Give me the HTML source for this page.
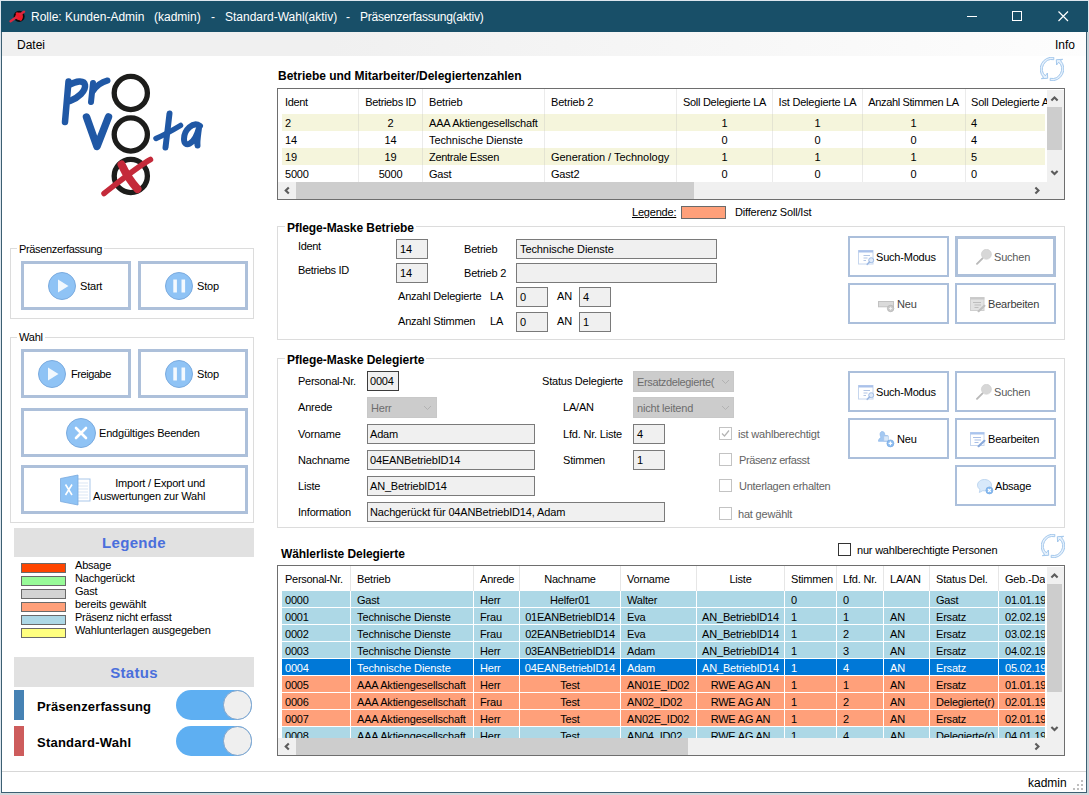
<!DOCTYPE html>
<html><head><meta charset="utf-8">
<style>
html,body{margin:0;padding:0;overflow:hidden;font-family:"Liberation Sans",sans-serif;}
body{width:1089px;height:795px;overflow:hidden;background:#fff;position:relative;font-family:"Liberation Sans",sans-serif;font-size:11px;color:#000;}
.a{position:absolute;}
.t{position:absolute;white-space:nowrap;}
.g{color:#6d6d6d;}
.tb{position:absolute;box-sizing:border-box;border:1px solid #7a7a7a;background:#f0f0f0;height:20px;}
.cb{position:absolute;box-sizing:border-box;background:#cccccc;border:1px solid #c8c8c8;height:21px;}
.gb{position:absolute;box-sizing:border-box;border:1px solid #dcdcdc;}
.btn{position:absolute;box-sizing:border-box;border:3px solid #adc0da;background:#fff;}
.btn2{position:absolute;box-sizing:border-box;border:2px solid #abbfdb;background:#fff;}
.chk{position:absolute;box-sizing:border-box;width:13px;height:13px;border:1px solid #c3c3c3;background:#fff;}
.grid{position:absolute;box-sizing:border-box;border:1px solid #6e6e6e;background:#fff;}
</style></head><body>
<div class="a" style="left:0px;top:0px;width:1089px;height:795px;background:#dde6ee;"></div>
<div class="a" style="left:1px;top:1px;width:1086px;height:792px;background:#3c5f72;"></div>
<div class="a" style="left:2px;top:32px;width:1084px;height:760px;background:#fff;"></div>
<div class="a" style="left:1px;top:1px;width:1087px;height:31px;background:#184f68;"></div>
<div class="a" style="left:1087px;top:32px;width:2px;height:763px;background:#c9d3d9;"></div>
<div class="a" style="left:0px;top:793px;width:1089px;height:2px;background:#d4d9dc;"></div>
<svg class="a" style="left:9px;top:8px;" width="18" height="16" viewBox="0 0 18 16"><circle cx="10.100" cy="8.400" r="4.700" fill="#e8202c" stroke="#0c0c0c" stroke-width="1.700"/><path d="M1.600 13.200 L15 3.700" stroke="#dc2840" stroke-width="2.400" stroke-linecap="round"/><path d="M8 5.500 L11.800 11.500" stroke="#f01828" stroke-width="2.600" stroke-linecap="round"/></svg>
<div class="t" style="left:31px;top:10px;font-size:12px;line-height:14px;letter-spacing:0.000px;color:#fff;">Rolle: Kunden-Admin</div>
<div class="t" style="left:154px;top:10px;font-size:12px;line-height:14px;letter-spacing:0.000px;color:#fff;">(kadmin)</div>
<div class="t" style="left:211px;top:10px;font-size:12px;line-height:14px;letter-spacing:0.000px;color:#fff;">-</div>
<div class="t" style="left:225px;top:10px;font-size:12px;line-height:14px;letter-spacing:0.000px;color:#fff;">Standard-Wahl(aktiv)</div>
<div class="t" style="left:346px;top:10px;font-size:12px;line-height:14px;letter-spacing:0.000px;color:#fff;">-</div>
<div class="t" style="left:360px;top:10px;font-size:12px;line-height:14px;letter-spacing:-0.256px;color:#fff;">Präsenzerfassung(aktiv)</div>
<svg class="a" style="left:960px;top:9px;" width="126" height="16" viewBox="0 0 126 16"><g fill="none" stroke="#fff" stroke-width="1"><path d="M7 7.500 H17"/><rect x="52.500" y="2.500" width="9" height="9"/><path d="M98.500 2.500 L108 12 M108 2.500 L98.500 12" stroke-width="1.200"/></g></svg>
<div class="a" style="left:2px;top:32px;width:1084px;height:24px;background:linear-gradient(90deg,#f0f0f0 0%,#f0f0f0 30%,#fdfdfd 100%);"></div>
<div class="t" style="left:17px;top:38px;font-size:12px;line-height:14px;letter-spacing:0.000px;">Datei</div>
<div class="t" style="left:1055px;top:38px;font-size:12px;line-height:14px;letter-spacing:0.000px;">Info</div>
<div class="a" style="left:2px;top:771px;width:1084px;height:1px;background:#d7d7d7;"></div>
<div class="t" style="left:1028px;top:776px;font-size:12px;line-height:14px;letter-spacing:0.000px;">kadmin</div>
<svg class="a" style="left:1073px;top:780px;" width="11" height="11"><g fill="#bfbfbf"><rect x="8" y="0" width="2" height="2"/><rect x="4" y="4" width="2" height="2"/><rect x="8" y="4" width="2" height="2"/><rect x="0" y="8" width="2" height="2"/><rect x="4" y="8" width="2" height="2"/><rect x="8" y="8" width="2" height="2"/></g></svg>
<svg class="a" style="left:50px;top:65px;" width="170" height="140" viewBox="50 65 170 140">
<g fill="none" stroke-linecap="round" stroke-linejoin="round">
<circle cx="130.800" cy="93" r="16.600" stroke="#1d1d1b" stroke-width="5.300"/>
<circle cx="130.800" cy="134.500" r="16.600" stroke="#1d1d1b" stroke-width="5.300"/>
<circle cx="130.800" cy="176" r="16.600" stroke="#1d1d1b" stroke-width="5.300"/>
<g stroke="#2058a5">
<path d="M68.500 81.500 L65 122" stroke-width="6.500"/>
<path d="M69 85 C76 81 84 79.500 85 85 C86 91 78 98 70 101" stroke-width="6.500"/>
<path d="M93 83 L91 102" stroke-width="6"/>
<path d="M93 91 C97 85 102 82 107.500 80.500" stroke-width="6"/>
<path d="M86.500 117 L97 146.500 L108.500 117" stroke-width="7.500"/>
<path d="M169.500 113.500 L165.500 147.500" stroke-width="6"/>
<path d="M156 138.500 C164 135 173 130 180.500 125.500" stroke-width="5.500"/>
<path d="M200 126 C193 121 184 130 184 139 C184 148 194 146 199 128 C198 136 197 141 197.500 145.500" stroke-width="6"/>
</g>
<g stroke="#c42a3a">
<path d="M104 193.500 C120 181 137 167 150.500 159.500" stroke-width="5.500"/>
<path d="M121.500 164.500 C126 174 132 183 137.500 189" stroke-width="8"/>
</g>
</g>
</svg>
<div class="gb" style="left:10px;top:248px;width:244px;height:71px;"></div>
<div class="t" style="left:17px;top:243px;font-size:11px;line-height:13px;letter-spacing:-0.354px;background:#fff;padding:0 2px;">Präsenzerfassung</div>
<div class="btn" style="left:21px;top:261px;width:110px;height:49px;"></div>
<div class="btn" style="left:138px;top:261px;width:110px;height:49px;"></div>
<svg class="a" style="left:48px;top:272px;" width="28" height="28" viewBox="0 0 28 28"><circle cx="14" cy="14" r="13.500" fill="#8fc3f5" stroke="#7aaade" stroke-width="1"/><path d="M10 7.500 L20.500 14 L10 20.500 Z" fill="#fff" fill-opacity="0.88"/></svg>
<div class="t" style="left:80px;top:280px;font-size:11px;line-height:13px;letter-spacing:-0.200px;">Start</div>
<svg class="a" style="left:165px;top:272px;" width="28" height="28" viewBox="0 0 28 28"><circle cx="14" cy="14" r="13.500" fill="#8fc3f5" stroke="#7aaade" stroke-width="1"/><rect x="8.300" y="7.500" width="3.600" height="13" fill="#fff" fill-opacity="0.9"/><rect x="16.500" y="7.500" width="3.600" height="13" fill="#fff" fill-opacity="0.9"/></svg>
<div class="t" style="left:197px;top:280px;font-size:11px;line-height:13px;letter-spacing:-0.200px;">Stop</div>
<div class="gb" style="left:10px;top:337px;width:244px;height:186px;"></div>
<div class="t" style="left:17px;top:331px;font-size:11px;line-height:13px;letter-spacing:-0.200px;background:#fff;padding:0 2px;">Wahl</div>
<div class="btn" style="left:21px;top:349px;width:110px;height:49px;"></div>
<div class="btn" style="left:138px;top:349px;width:110px;height:49px;"></div>
<div class="btn" style="left:21px;top:408px;width:227px;height:49px;"></div>
<div class="btn" style="left:21px;top:465px;width:227px;height:49px;"></div>
<svg class="a" style="left:38px;top:360px;" width="28" height="28" viewBox="0 0 28 28"><circle cx="14" cy="14" r="13.500" fill="#8fc3f5" stroke="#7aaade" stroke-width="1"/><path d="M10 7.500 L20.500 14 L10 20.500 Z" fill="#fff" fill-opacity="0.88"/></svg>
<div class="t" style="left:71px;top:368px;font-size:11px;line-height:13px;letter-spacing:-0.428px;">Freigabe</div>
<svg class="a" style="left:165px;top:360px;" width="28" height="28" viewBox="0 0 28 28"><circle cx="14" cy="14" r="13.500" fill="#8fc3f5" stroke="#7aaade" stroke-width="1"/><rect x="8.300" y="7.500" width="3.600" height="13" fill="#fff" fill-opacity="0.9"/><rect x="16.500" y="7.500" width="3.600" height="13" fill="#fff" fill-opacity="0.9"/></svg>
<div class="t" style="left:197px;top:368px;font-size:11px;line-height:13px;letter-spacing:-0.200px;">Stop</div>
<svg class="a" style="left:66px;top:418px;" width="30" height="30" viewBox="0 0 30 30"><circle cx="15" cy="15" r="14.500" fill="#8fc3f5" stroke="#7aaade" stroke-width="1"/><path d="M10 10 L20 20 M20 10 L10 20" stroke="#fff" stroke-width="2.600" stroke-linecap="round"/></svg>
<div class="t" style="left:99px;top:427px;font-size:11px;line-height:13px;letter-spacing:-0.200px;">Endgültiges Beenden</div>
<svg class="a" style="left:59px;top:473px;" width="34" height="34" viewBox="0 0 34 34"><rect x="17" y="6" width="14" height="22" fill="#fff" stroke="#a9c7ea" stroke-width="1"/><path d="M19 10h10M19 13h10M19 16h10M19 19h10M19 22h10M19 25h10" stroke="#dbe7f5" stroke-width="1"/><path d="M1.500 5.500 L19 2 L19 32 L1.500 28.500 Z" fill="#8fc3f5" stroke="#7aaade" stroke-width="0.800"/><path d="M6.500 11.500 L13 22 M13 11.500 L6.500 22" stroke="#fff" stroke-width="1.600"/></svg>
<div class="t" style="left:93px;top:477px;font-size:11px;line-height:13px;letter-spacing:-0.200px;width:112px;text-align:right;">Import / Export und</div>
<div class="t" style="left:93px;top:490px;font-size:11px;line-height:13px;letter-spacing:-0.200px;width:112px;text-align:right;">Auswertungen zur Wahl</div>
<div class="a" style="left:14px;top:528px;width:240px;height:29px;background:#e1e1e1;"></div>
<div class="t" style="left:14px;top:534px;font-size:15px;line-height:17px;letter-spacing:0.300px;font-weight:bold;width:240px;text-align:center;color:#4a6fdc;">Legende</div>
<div class="a" style="left:21px;top:563px;width:45px;height:10px;background:#ff4500;box-sizing:border-box;border:1px solid #6a6a6a;"></div>
<div class="t" style="left:75px;top:559px;font-size:11px;line-height:13px;letter-spacing:-0.200px;">Absage</div>
<div class="a" style="left:21px;top:576px;width:45px;height:10px;background:#98fb98;box-sizing:border-box;border:1px solid #6a6a6a;"></div>
<div class="t" style="left:75px;top:572px;font-size:11px;line-height:13px;letter-spacing:-0.200px;">Nachgerückt</div>
<div class="a" style="left:21px;top:589px;width:45px;height:10px;background:#d3d3d3;box-sizing:border-box;border:1px solid #6a6a6a;"></div>
<div class="t" style="left:75px;top:585px;font-size:11px;line-height:13px;letter-spacing:-0.200px;">Gast</div>
<div class="a" style="left:21px;top:602px;width:45px;height:10px;background:#ffa07a;box-sizing:border-box;border:1px solid #6a6a6a;"></div>
<div class="t" style="left:75px;top:598px;font-size:11px;line-height:13px;letter-spacing:-0.200px;">bereits gewählt</div>
<div class="a" style="left:21px;top:615px;width:45px;height:10px;background:#add8e6;box-sizing:border-box;border:1px solid #6a6a6a;"></div>
<div class="t" style="left:75px;top:611px;font-size:11px;line-height:13px;letter-spacing:-0.301px;">Präsenz nicht erfasst</div>
<div class="a" style="left:21px;top:628px;width:45px;height:10px;background:#ffff80;box-sizing:border-box;border:1px solid #6a6a6a;"></div>
<div class="t" style="left:75px;top:624px;font-size:11px;line-height:13px;letter-spacing:-0.187px;">Wahlunterlagen ausgegeben</div>
<div class="a" style="left:14px;top:657px;width:240px;height:30px;background:#e1e1e1;"></div>
<div class="t" style="left:14px;top:664px;font-size:15px;line-height:17px;letter-spacing:0.300px;font-weight:bold;width:240px;text-align:center;color:#4a6fdc;">Status</div>
<div class="a" style="left:14px;top:690px;width:10px;height:30px;background:#4682b4;"></div>
<div class="a" style="left:14px;top:726px;width:10px;height:30px;background:#cd5c5c;"></div>
<div class="t" style="left:37px;top:699px;font-size:13px;line-height:15px;letter-spacing:0.138px;font-weight:bold;">Präsenzerfassung</div>
<div class="t" style="left:37px;top:735px;font-size:13px;line-height:15px;letter-spacing:0.235px;font-weight:bold;">Standard-Wahl</div>
<div class="a" style="left:176px;top:690px;width:76px;height:30px;border-radius:15px;background:#5eaff2;"></div>
<div class="a" style="left:222.500px;top:690.3px;width:29.400px;height:29.400px;border-radius:15px;background:#efefef;box-sizing:border-box;border:1px solid #7da3cc;"></div>
<div class="a" style="left:176px;top:726px;width:76px;height:30px;border-radius:15px;background:#5eaff2;"></div>
<div class="a" style="left:222.500px;top:726.3px;width:29.400px;height:29.400px;border-radius:15px;background:#efefef;box-sizing:border-box;border:1px solid #7da3cc;"></div>
<div class="t" style="left:278px;top:69px;font-size:12px;line-height:14px;letter-spacing:-0.013px;font-weight:bold;">Betriebe und Mitarbeiter/Delegiertenzahlen</div>
<svg class="a" style="left:1040px;top:57px;" width="24" height="24" viewBox="0 0 24 24"><g fill="#e6f1fc" stroke="#9cc3ea" stroke-width="0.9" stroke-linejoin="round">
<path d="M13.800 0.300 A12 12 0 0 0 3.500 20.500 L1.300 21.700 L7.700 21.300 L7.400 16 L5.300 18.800 A9.500 9.500 0 0 1 13.800 2.700 Z"/>
<path d="M13.800 0.300 A12 12 0 0 0 3.500 20.500 L1.300 21.700 L7.700 21.300 L7.400 16 L5.300 18.800 A9.500 9.500 0 0 1 13.800 2.700 Z" transform="rotate(180 12 12)"/>
</g></svg>
<svg class="a" style="left:1041px;top:534px;" width="24" height="24" viewBox="0 0 24 24"><g fill="#e6f1fc" stroke="#9cc3ea" stroke-width="0.9" stroke-linejoin="round">
<path d="M13.800 0.300 A12 12 0 0 0 3.500 20.500 L1.300 21.700 L7.700 21.300 L7.400 16 L5.300 18.800 A9.500 9.500 0 0 1 13.800 2.700 Z"/>
<path d="M13.800 0.300 A12 12 0 0 0 3.500 20.500 L1.300 21.700 L7.700 21.300 L7.400 16 L5.300 18.800 A9.500 9.500 0 0 1 13.800 2.700 Z" transform="rotate(180 12 12)"/>
</g></svg>
<div class="grid" style="left:277px;top:88px;width:788px;height:112px;"></div>
<div class="a" style="left:282px;top:114px;width:763px;height:17px;background:#f5f5dc;"></div>
<div class="a" style="left:282px;top:148px;width:763px;height:17px;background:#f5f5dc;"></div>
<div class="a" style="left:358px;top:89px;width:1px;height:93px;background:rgba(190,190,190,0.3);"></div>
<div class="a" style="left:422px;top:89px;width:1px;height:93px;background:rgba(190,190,190,0.3);"></div>
<div class="a" style="left:544px;top:89px;width:1px;height:93px;background:rgba(190,190,190,0.3);"></div>
<div class="a" style="left:676px;top:89px;width:1px;height:93px;background:rgba(190,190,190,0.3);"></div>
<div class="a" style="left:772px;top:89px;width:1px;height:93px;background:rgba(190,190,190,0.3);"></div>
<div class="a" style="left:862px;top:89px;width:1px;height:93px;background:rgba(190,190,190,0.3);"></div>
<div class="a" style="left:965px;top:89px;width:1px;height:93px;background:rgba(190,190,190,0.3);"></div>
<div class="a" style="left:0;top:89px;width:1047px;height:93px;overflow:hidden;"><div class="a" style="left:0;top:-89px;">
<div class="t" style="left:285px;top:96px;font-size:11px;line-height:13px;letter-spacing:-0.374px;">Ident</div>
<div class="t" style="left:359px;top:96px;font-size:11px;line-height:13px;letter-spacing:-0.334px;width:63px;text-align:center;">Betriebs ID</div>
<div class="t" style="left:429px;top:96px;font-size:11px;line-height:13px;letter-spacing:-0.200px;">Betrieb</div>
<div class="t" style="left:551px;top:96px;font-size:11px;line-height:13px;letter-spacing:-0.200px;">Betrieb 2</div>
<div class="t" style="left:677px;top:96px;font-size:11px;line-height:13px;letter-spacing:-0.267px;width:95px;text-align:center;">Soll Delegierte LA</div>
<div class="t" style="left:773px;top:96px;font-size:11px;line-height:13px;letter-spacing:-0.200px;width:89px;text-align:center;">Ist Delegierte LA</div>
<div class="t" style="left:862px;top:96px;font-size:11px;line-height:13px;letter-spacing:-0.359px;width:103px;text-align:center;">Anzahl Stimmen LA</div>
<div class="t" style="left:971px;top:96px;font-size:11px;line-height:13px;letter-spacing:-0.200px;">Soll Delegierte AN</div>
<div class="t" style="left:285px;top:117px;font-size:11px;line-height:13px;letter-spacing:-0.200px;">2</div>
<div class="t" style="left:359px;top:117px;font-size:11px;line-height:13px;letter-spacing:-0.200px;width:63px;text-align:center;">2</div>
<div class="t" style="left:429px;top:117px;font-size:11px;line-height:13px;letter-spacing:-0.171px;">AAA Aktiengesellschaft</div>
<div class="t" style="left:677px;top:117px;font-size:11px;line-height:13px;letter-spacing:-0.200px;width:95px;text-align:center;">1</div>
<div class="t" style="left:773px;top:117px;font-size:11px;line-height:13px;letter-spacing:-0.200px;width:89px;text-align:center;">1</div>
<div class="t" style="left:862px;top:117px;font-size:11px;line-height:13px;letter-spacing:-0.200px;width:103px;text-align:center;">1</div>
<div class="t" style="left:971px;top:117px;font-size:11px;line-height:13px;letter-spacing:-0.200px;">4</div>
<div class="t" style="left:285px;top:134px;font-size:11px;line-height:13px;letter-spacing:-0.200px;">14</div>
<div class="t" style="left:359px;top:134px;font-size:11px;line-height:13px;letter-spacing:-0.200px;width:63px;text-align:center;">14</div>
<div class="t" style="left:429px;top:134px;font-size:11px;line-height:13px;letter-spacing:-0.091px;">Technische Dienste</div>
<div class="t" style="left:677px;top:134px;font-size:11px;line-height:13px;letter-spacing:-0.200px;width:95px;text-align:center;">0</div>
<div class="t" style="left:773px;top:134px;font-size:11px;line-height:13px;letter-spacing:-0.200px;width:89px;text-align:center;">0</div>
<div class="t" style="left:862px;top:134px;font-size:11px;line-height:13px;letter-spacing:-0.200px;width:103px;text-align:center;">0</div>
<div class="t" style="left:971px;top:134px;font-size:11px;line-height:13px;letter-spacing:-0.200px;">4</div>
<div class="t" style="left:285px;top:151px;font-size:11px;line-height:13px;letter-spacing:-0.200px;">19</div>
<div class="t" style="left:359px;top:151px;font-size:11px;line-height:13px;letter-spacing:-0.200px;width:63px;text-align:center;">19</div>
<div class="t" style="left:429px;top:151px;font-size:11px;line-height:13px;letter-spacing:-0.285px;">Zentrale Essen</div>
<div class="t" style="left:551px;top:151px;font-size:11px;line-height:13px;letter-spacing:-0.035px;">Generation / Technology</div>
<div class="t" style="left:677px;top:151px;font-size:11px;line-height:13px;letter-spacing:-0.200px;width:95px;text-align:center;">1</div>
<div class="t" style="left:773px;top:151px;font-size:11px;line-height:13px;letter-spacing:-0.200px;width:89px;text-align:center;">1</div>
<div class="t" style="left:862px;top:151px;font-size:11px;line-height:13px;letter-spacing:-0.200px;width:103px;text-align:center;">1</div>
<div class="t" style="left:971px;top:151px;font-size:11px;line-height:13px;letter-spacing:-0.200px;">5</div>
<div class="t" style="left:285px;top:168px;font-size:11px;line-height:13px;letter-spacing:-0.200px;">5000</div>
<div class="t" style="left:359px;top:168px;font-size:11px;line-height:13px;letter-spacing:-0.200px;width:63px;text-align:center;">5000</div>
<div class="t" style="left:429px;top:168px;font-size:11px;line-height:13px;letter-spacing:-0.200px;">Gast</div>
<div class="t" style="left:551px;top:168px;font-size:11px;line-height:13px;letter-spacing:-0.200px;">Gast2</div>
<div class="t" style="left:677px;top:168px;font-size:11px;line-height:13px;letter-spacing:-0.200px;width:95px;text-align:center;">0</div>
<div class="t" style="left:773px;top:168px;font-size:11px;line-height:13px;letter-spacing:-0.200px;width:89px;text-align:center;">0</div>
<div class="t" style="left:862px;top:168px;font-size:11px;line-height:13px;letter-spacing:-0.200px;width:103px;text-align:center;">0</div>
<div class="t" style="left:971px;top:168px;font-size:11px;line-height:13px;letter-spacing:-0.200px;">0</div>
</div></div>
<div class="a" style="left:278px;top:182px;width:786px;height:17px;background:#f0f0f0;"></div>
<div class="a" style="left:296px;top:182px;width:398px;height:17px;background:#cdcdcd;"></div>
<svg class="a" style="left:278px;top:182px;" width="17" height="17"><path d="M10.800 5.400 L7.700 8.500 L10.800 11.600" fill="none" stroke="#5c5c5c" stroke-width="2.100"/></svg>
<svg class="a" style="left:1030px;top:182px;" width="17" height="17"><path d="M5.400 5.400 L8.500 8.500 L5.400 11.600" fill="none" stroke="#5c5c5c" stroke-width="2.100"/></svg>
<div class="a" style="left:1047px;top:90px;width:17px;height:92px;background:#f0f0f0;"></div>
<div class="a" style="left:1047px;top:107px;width:15px;height:43px;background:#cdcdcd;"></div>
<svg class="a" style="left:1047px;top:89px;" width="17" height="17"><path d="M4.400 11.600 L7.500 8.500 L10.600 11.600" fill="none" stroke="#5c5c5c" stroke-width="2.100"/></svg>
<svg class="a" style="left:1047px;top:165px;" width="17" height="17"><path d="M4.400 6 L7.500 9.100 L10.600 6" fill="none" stroke="#5c5c5c" stroke-width="2.100"/></svg>
<div class="t" style="left:632px;top:206px;font-size:11px;line-height:13px;letter-spacing:-0.200px;text-decoration:underline;">Legende:</div>
<div class="a" style="left:681px;top:206px;width:45px;height:13px;background:#ffa07a;box-sizing:border-box;border:1px solid #6a6a6a;"></div>
<div class="t" style="left:735px;top:206px;font-size:11px;line-height:13px;letter-spacing:-0.200px;">Differenz Soll/Ist</div>
<div class="gb" style="left:277px;top:226px;width:788px;height:114px;"></div>
<div class="t" style="left:285px;top:221px;font-size:12px;line-height:14px;letter-spacing:-0.051px;font-weight:bold;background:#fff;padding:0 2px;">Pflege-Maske Betriebe</div>
<div class="t" style="left:298px;top:240px;font-size:11px;line-height:13px;letter-spacing:-0.374px;">Ident</div>
<div class="t" style="left:298px;top:264px;font-size:11px;line-height:13px;letter-spacing:-0.334px;">Betriebs ID</div>
<div class="tb" style="left:396px;top:239px;width:32px;"></div>
<div class="t" style="left:400px;top:243px;font-size:11px;line-height:13px;letter-spacing:-0.200px;">14</div>
<div class="tb" style="left:396px;top:263px;width:32px;"></div>
<div class="t" style="left:400px;top:267px;font-size:11px;line-height:13px;letter-spacing:-0.200px;">14</div>
<div class="t" style="left:464px;top:243px;font-size:11px;line-height:13px;letter-spacing:-0.200px;">Betrieb</div>
<div class="t" style="left:464px;top:267px;font-size:11px;line-height:13px;letter-spacing:-0.200px;">Betrieb 2</div>
<div class="tb" style="left:516px;top:239px;width:201px;"></div>
<div class="t" style="left:520px;top:243px;font-size:11px;line-height:13px;letter-spacing:-0.091px;">Technische Dienste</div>
<div class="tb" style="left:516px;top:263px;width:201px;"></div>
<div class="t" style="left:398px;top:290px;font-size:11px;line-height:13px;letter-spacing:-0.200px;">Anzahl Delegierte</div>
<div class="t" style="left:398px;top:315px;font-size:11px;line-height:13px;letter-spacing:-0.200px;">Anzahl Stimmen</div>
<div class="t" style="left:490px;top:290px;font-size:11px;line-height:13px;letter-spacing:-0.200px;">LA</div>
<div class="t" style="left:490px;top:315px;font-size:11px;line-height:13px;letter-spacing:-0.200px;">LA</div>
<div class="tb" style="left:516px;top:287px;width:32px;"></div>
<div class="t" style="left:520px;top:291px;font-size:11px;line-height:13px;letter-spacing:-0.200px;">0</div>
<div class="tb" style="left:516px;top:312px;width:32px;"></div>
<div class="t" style="left:520px;top:316px;font-size:11px;line-height:13px;letter-spacing:-0.200px;">0</div>
<div class="t" style="left:557px;top:290px;font-size:11px;line-height:13px;letter-spacing:-0.200px;">AN</div>
<div class="t" style="left:557px;top:315px;font-size:11px;line-height:13px;letter-spacing:-0.200px;">AN</div>
<div class="tb" style="left:579px;top:287px;width:32px;"></div>
<div class="t" style="left:583px;top:291px;font-size:11px;line-height:13px;letter-spacing:-0.200px;">4</div>
<div class="tb" style="left:579px;top:312px;width:32px;"></div>
<div class="t" style="left:583px;top:316px;font-size:11px;line-height:13px;letter-spacing:-0.200px;">1</div>
<div class="btn2" style="left:848px;top:236px;width:101px;height:41px;"></div>
<svg class="a" style="left:858px;top:250px;" width="17" height="16" viewBox="0 0 17 16"><rect x="0.500" y="0.500" width="14.500" height="13.500" fill="#fff" stroke="#c6d6ee"/><rect x="0.500" y="0.300" width="14.500" height="2.200" fill="#aac1ea"/><path d="M5.500 5.500h6.500M5.500 8h4M5.500 10.500h2.500" stroke="#b4c6e4" stroke-width="1"/><circle cx="13.200" cy="10.200" r="2.500" fill="#dfeaf9" stroke="#9cb8e2" stroke-width="0.900"/><path d="M11.400 12.100 L9.300 14.300" stroke="#9cb8e2" stroke-width="1.600" stroke-linecap="round"/></svg>
<div class="t" style="left:876px;top:251px;font-size:11px;line-height:13px;letter-spacing:-0.200px;">Such-Modus</div>
<div class="btn" style="left:955px;top:236px;width:101px;height:41px;"></div>
<svg class="a" style="left:976px;top:249px;" width="17" height="17" viewBox="0 0 17 17"><path d="M6.500 9.300 L1 14.800" stroke="#b9b9b9" stroke-width="1.900" stroke-linecap="round"/><circle cx="10.400" cy="5.300" r="5" fill="#d7d7d7" stroke="#cdcdcd" stroke-width="0.600"/></svg>
<div class="t" style="left:994px;top:251px;font-size:11px;line-height:13px;letter-spacing:-0.200px;color:#5a5a5a;">Suchen</div>
<div class="btn2" style="left:848px;top:283px;width:101px;height:41px;"></div>
<svg class="a" style="left:878px;top:301px;" width="17" height="12" viewBox="0 0 17 12"><rect x="0.500" y="0.500" width="15" height="5.300" fill="#dadada" stroke="#c2c2c2"/><circle cx="12.600" cy="7.500" r="3.200" fill="#cbcbcb" stroke="#b4b4b4" stroke-width="0.800"/><path d="M11.100 7.500h3M12.600 6v3" stroke="#f4f4f4" stroke-width="0.900"/></svg>
<div class="t" style="left:897px;top:298px;font-size:11px;line-height:13px;letter-spacing:-0.200px;color:#444;">Neu</div>
<div class="btn2" style="left:955px;top:283px;width:101px;height:41px;"></div>
<svg class="a" style="left:970px;top:297px;" width="17" height="16" viewBox="0 0 17 16"><rect x="0.500" y="0.500" width="13.500" height="13" fill="#e2e2e2" stroke="#cfcfcf"/><rect x="0.300" y="0.300" width="14" height="2.200" fill="#c9c9c9"/><path d="M3 5.500h8M4.500 8h6.500M4.500 10.500h4" stroke="#bdbdbd" stroke-width="1"/><path d="M14.400 8.800 L8.600 14.200" stroke="#c0c0c0" stroke-width="2.200" stroke-linecap="round"/></svg>
<div class="t" style="left:988px;top:298px;font-size:11px;line-height:13px;letter-spacing:-0.200px;color:#3c3c3c;">Bearbeiten</div>
<div class="gb" style="left:277px;top:358px;width:788px;height:170px;"></div>
<div class="t" style="left:285px;top:353px;font-size:12px;line-height:14px;letter-spacing:-0.029px;font-weight:bold;background:#fff;padding:0 2px;">Pflege-Maske Delegierte</div>
<div class="t" style="left:298px;top:375px;font-size:11px;line-height:13px;letter-spacing:-0.283px;">Personal-Nr.</div>
<div class="t" style="left:298px;top:401px;font-size:11px;line-height:13px;letter-spacing:-0.200px;">Anrede</div>
<div class="t" style="left:298px;top:428px;font-size:11px;line-height:13px;letter-spacing:-0.200px;">Vorname</div>
<div class="t" style="left:298px;top:454px;font-size:11px;line-height:13px;letter-spacing:-0.200px;">Nachname</div>
<div class="t" style="left:298px;top:480px;font-size:11px;line-height:13px;letter-spacing:-0.200px;">Liste</div>
<div class="t" style="left:298px;top:506px;font-size:11px;line-height:13px;letter-spacing:-0.200px;">Information</div>
<div class="tb" style="left:367px;top:371px;width:32px;border-color:#3c3c3c;"></div>
<div class="t" style="left:370px;top:375px;font-size:11px;line-height:13px;letter-spacing:-0.200px;">0004</div>
<div class="cb" style="left:367px;top:397px;width:70px;"></div>
<div class="t" style="left:371px;top:402px;font-size:11px;line-height:13px;letter-spacing:-0.200px;color:#6d6d6d;">Herr</div>
<div class="tb" style="left:367px;top:424px;width:168px;"></div>
<div class="t" style="left:370px;top:428px;font-size:11px;line-height:13px;letter-spacing:-0.200px;">Adam</div>
<div class="tb" style="left:367px;top:450px;width:168px;"></div>
<div class="t" style="left:370px;top:454px;font-size:11px;line-height:13px;letter-spacing:-0.166px;">04EANBetriebID14</div>
<div class="tb" style="left:367px;top:476px;width:168px;"></div>
<div class="t" style="left:370px;top:480px;font-size:11px;line-height:13px;letter-spacing:-0.193px;">AN_BetriebID14</div>
<div class="tb" style="left:367px;top:502px;width:298px;"></div>
<div class="t" style="left:370px;top:506px;font-size:11px;line-height:13px;letter-spacing:-0.145px;">Nachgerückt für 04ANBetriebID14, Adam</div>
<div class="t" style="left:542px;top:375px;font-size:11px;line-height:13px;letter-spacing:-0.200px;">Status Delegierte</div>
<div class="t" style="left:563px;top:401px;font-size:11px;line-height:13px;letter-spacing:-0.200px;">LA/AN</div>
<div class="t" style="left:563px;top:428px;font-size:11px;line-height:13px;letter-spacing:-0.200px;">Lfd. Nr. Liste</div>
<div class="t" style="left:563px;top:454px;font-size:11px;line-height:13px;letter-spacing:-0.200px;">Stimmen</div>
<div class="cb" style="left:633px;top:371px;width:101px;"></div>
<div class="t" style="left:637px;top:376px;font-size:11px;line-height:13px;letter-spacing:-0.362px;color:#6d6d6d;">Ersatzdelegierte(</div>
<div class="cb" style="left:633px;top:397px;width:101px;"></div>
<div class="t" style="left:637px;top:402px;font-size:11px;line-height:13px;letter-spacing:-0.200px;color:#6d6d6d;">nicht leitend</div>
<div class="tb" style="left:633px;top:424px;width:32px;"></div>
<div class="t" style="left:637px;top:428px;font-size:11px;line-height:13px;letter-spacing:-0.200px;">4</div>
<div class="tb" style="left:633px;top:450px;width:32px;"></div>
<div class="t" style="left:637px;top:454px;font-size:11px;line-height:13px;letter-spacing:-0.200px;">1</div>
<svg class="a" style="left:423px;top:405px;" width="9" height="6" viewBox="0 0 9 6"><path d="M1 1 L4.500 4.500 L8 1" fill="none" stroke="#b2b2b2" stroke-width="1"/></svg>
<svg class="a" style="left:721px;top:379px;" width="9" height="6" viewBox="0 0 9 6"><path d="M1 1 L4.500 4.500 L8 1" fill="none" stroke="#b2b2b2" stroke-width="1"/></svg>
<svg class="a" style="left:721px;top:405px;" width="9" height="6" viewBox="0 0 9 6"><path d="M1 1 L4.500 4.500 L8 1" fill="none" stroke="#b2b2b2" stroke-width="1"/></svg>
<div class="chk" style="left:719px;top:427px;"></div>
<svg class="a" style="left:719px;top:427px;" width="13" height="13"><path d="M3 6.500 L5.500 9 L10 3.500" fill="none" stroke="#b4b4b4" stroke-width="1.200"/></svg>
<div class="t" style="left:738px;top:428px;font-size:11px;line-height:13px;letter-spacing:-0.189px;color:#636363;">ist wahlberechtigt</div>
<div class="chk" style="left:719px;top:453px;"></div>
<div class="t" style="left:739px;top:454px;font-size:11px;line-height:13px;letter-spacing:-0.408px;color:#636363;">Präsenz erfasst</div>
<div class="chk" style="left:719px;top:479px;"></div>
<div class="t" style="left:739px;top:480px;font-size:11px;line-height:13px;letter-spacing:-0.275px;color:#636363;">Unterlagen erhalten</div>
<div class="chk" style="left:719px;top:507px;"></div>
<div class="t" style="left:738px;top:508px;font-size:11px;line-height:13px;letter-spacing:-0.188px;color:#636363;">hat gewählt</div>
<div class="btn2" style="left:848px;top:371px;width:101px;height:41px;"></div>
<svg class="a" style="left:858px;top:385px;" width="17" height="16" viewBox="0 0 17 16"><rect x="0.500" y="0.500" width="14.500" height="13.500" fill="#fff" stroke="#c6d6ee"/><rect x="0.500" y="0.300" width="14.500" height="2.200" fill="#aac1ea"/><path d="M5.500 5.500h6.500M5.500 8h4M5.500 10.500h2.500" stroke="#b4c6e4" stroke-width="1"/><circle cx="13.200" cy="10.200" r="2.500" fill="#dfeaf9" stroke="#9cb8e2" stroke-width="0.900"/><path d="M11.400 12.100 L9.300 14.300" stroke="#9cb8e2" stroke-width="1.600" stroke-linecap="round"/></svg>
<div class="t" style="left:876px;top:386px;font-size:11px;line-height:13px;letter-spacing:-0.200px;">Such-Modus</div>
<div class="btn2" style="left:955px;top:371px;width:101px;height:41px;"></div>
<svg class="a" style="left:976px;top:384px;" width="17" height="17" viewBox="0 0 17 17"><path d="M6.500 9.300 L1 14.800" stroke="#b9b9b9" stroke-width="1.900" stroke-linecap="round"/><circle cx="10.400" cy="5.300" r="5" fill="#d7d7d7" stroke="#cdcdcd" stroke-width="0.600"/></svg>
<div class="t" style="left:994px;top:386px;font-size:11px;line-height:13px;letter-spacing:-0.200px;color:#5a5a5a;">Suchen</div>
<div class="btn2" style="left:848px;top:418px;width:101px;height:41px;"></div>
<svg class="a" style="left:878px;top:431px;" width="17" height="17" viewBox="0 0 17 17"><path d="M4.300 0.500 C2.600 0.500 1.900 2 2.100 3.800 C2.200 5.200 2.900 5.900 2.900 6.600 C1.800 7.100 0.600 8 0.400 10.300 L9.500 10.300 L9.500 4.500 L6.800 4.500 C6.900 2.300 6.200 0.500 4.300 0.500 Z" fill="#a4c9f2" stroke="#8fb8ea" stroke-width="0.700"/><rect x="5.800" y="5" width="4.500" height="5" fill="#d9e8f9" stroke="#a9c6ec" stroke-width="0.700"/><circle cx="12.400" cy="12.400" r="3.500" fill="#8cbcf0" stroke="#78aae4" stroke-width="0.700"/><path d="M10.600 12.400h3.600M12.400 10.600v3.600" stroke="#fff" stroke-width="1.200"/></svg>
<div class="t" style="left:897px;top:433px;font-size:11px;line-height:13px;letter-spacing:-0.200px;">Neu</div>
<div class="btn2" style="left:955px;top:418px;width:101px;height:41px;"></div>
<svg class="a" style="left:970px;top:432px;" width="17" height="16" viewBox="0 0 17 16"><rect x="0.500" y="0.500" width="13.500" height="13" fill="#fff" stroke="#c6d6ee"/><rect x="0.300" y="0.300" width="14" height="2.200" fill="#a9c4ee"/><path d="M3 5.500h8M4.500 8h6.500M4.500 10.500h4" stroke="#a9bfe6" stroke-width="1"/><path d="M14.400 8.800 L8.600 14.200" stroke="#8aa9da" stroke-width="2.200" stroke-linecap="round"/></svg>
<div class="t" style="left:988px;top:433px;font-size:11px;line-height:13px;letter-spacing:-0.200px;">Bearbeiten</div>
<div class="btn2" style="left:955px;top:465px;width:101px;height:41px;"></div>
<svg class="a" style="left:977px;top:479px;" width="17" height="16" viewBox="0 0 17 16"><path d="M7.500 0.500 C3.500 0.500 0.500 3 0.500 6.200 C0.500 8 1.500 9.500 3 10.500 L2.300 13.500 L5.800 11.700 C6.400 11.800 6.900 11.900 7.500 11.900 C11.500 11.900 14.500 9.400 14.500 6.200 C14.500 3 11.500 0.500 7.500 0.500 Z" fill="#d8e9fa" stroke="#b4cfee" stroke-width="0.800"/><circle cx="12.400" cy="11.400" r="3.500" fill="#86baf0" stroke="#78aae4" stroke-width="0.700"/><path d="M11 10l2.800 2.800M13.800 10l-2.800 2.800" stroke="#fff" stroke-width="1.200"/></svg>
<div class="t" style="left:995px;top:480px;font-size:11px;line-height:13px;letter-spacing:-0.200px;">Absage</div>
<div class="t" style="left:281px;top:547px;font-size:12px;line-height:14px;letter-spacing:-0.075px;font-weight:bold;">Wählerliste Delegierte</div>
<div class="a" style="left:838px;top:543px;width:13px;height:13px;background:#fff;box-sizing:border-box;border:1px solid #333;"></div>
<div class="t" style="left:857px;top:544px;font-size:11px;line-height:13px;letter-spacing:-0.206px;">nur wahlberechtigte Personen</div>
<div class="grid" style="left:277px;top:565px;width:788px;height:191px;"></div>
<div class="a" style="left:0;top:566px;width:1045px;height:172px;overflow:hidden;"><div class="a" style="left:0;top:-566px;">
<div class="a" style="left:350px;top:566px;width:1px;height:25px;background:#e6e6e6;"></div>
<div class="a" style="left:473px;top:566px;width:1px;height:25px;background:#e6e6e6;"></div>
<div class="a" style="left:519px;top:566px;width:1px;height:25px;background:#e6e6e6;"></div>
<div class="a" style="left:620px;top:566px;width:1px;height:25px;background:#e6e6e6;"></div>
<div class="a" style="left:696px;top:566px;width:1px;height:25px;background:#e6e6e6;"></div>
<div class="a" style="left:784px;top:566px;width:1px;height:25px;background:#e6e6e6;"></div>
<div class="a" style="left:836px;top:566px;width:1px;height:25px;background:#e6e6e6;"></div>
<div class="a" style="left:883px;top:566px;width:1px;height:25px;background:#e6e6e6;"></div>
<div class="a" style="left:929px;top:566px;width:1px;height:25px;background:#e6e6e6;"></div>
<div class="a" style="left:998px;top:566px;width:1px;height:25px;background:#e6e6e6;"></div>
<div class="t" style="left:285px;top:573px;font-size:11px;line-height:13px;letter-spacing:-0.283px;">Personal-Nr.</div>
<div class="t" style="left:357px;top:573px;font-size:11px;line-height:13px;letter-spacing:-0.200px;">Betrieb</div>
<div class="t" style="left:480px;top:573px;font-size:11px;line-height:13px;letter-spacing:-0.200px;">Anrede</div>
<div class="t" style="left:520px;top:573px;font-size:11px;line-height:13px;letter-spacing:-0.200px;width:100px;text-align:center;">Nachname</div>
<div class="t" style="left:627px;top:573px;font-size:11px;line-height:13px;letter-spacing:-0.200px;">Vorname</div>
<div class="t" style="left:697px;top:573px;font-size:11px;line-height:13px;letter-spacing:-0.200px;width:87px;text-align:center;">Liste</div>
<div class="t" style="left:791px;top:573px;font-size:11px;line-height:13px;letter-spacing:-0.200px;">Stimmen</div>
<div class="t" style="left:843px;top:573px;font-size:11px;line-height:13px;letter-spacing:-0.200px;">Lfd. Nr.</div>
<div class="t" style="left:890px;top:573px;font-size:11px;line-height:13px;letter-spacing:-0.200px;">LA/AN</div>
<div class="t" style="left:936px;top:573px;font-size:11px;line-height:13px;letter-spacing:-0.200px;">Status Del.</div>
<div class="t" style="left:1005px;top:573px;font-size:11px;line-height:13px;letter-spacing:-0.200px;">Geb.-Datum</div>
<div class="a" style="left:282px;top:591px;width:68px;height:16px;background:#add8e6;"></div>
<div class="t" style="left:285px;top:594px;font-size:11px;line-height:13px;letter-spacing:-0.200px;">0000</div>
<div class="a" style="left:351px;top:591px;width:122px;height:16px;background:#add8e6;"></div>
<div class="t" style="left:357px;top:594px;font-size:11px;line-height:13px;letter-spacing:-0.200px;">Gast</div>
<div class="a" style="left:474px;top:591px;width:45px;height:16px;background:#add8e6;"></div>
<div class="t" style="left:480px;top:594px;font-size:11px;line-height:13px;letter-spacing:-0.200px;">Herr</div>
<div class="a" style="left:520px;top:591px;width:100px;height:16px;background:#add8e6;"></div>
<div class="t" style="left:520px;top:594px;font-size:11px;line-height:13px;letter-spacing:-0.200px;width:100px;text-align:center;">Helfer01</div>
<div class="a" style="left:621px;top:591px;width:75px;height:16px;background:#add8e6;"></div>
<div class="t" style="left:627px;top:594px;font-size:11px;line-height:13px;letter-spacing:-0.200px;">Walter</div>
<div class="a" style="left:697px;top:591px;width:87px;height:16px;background:#add8e6;"></div>
<div class="a" style="left:785px;top:591px;width:51px;height:16px;background:#add8e6;"></div>
<div class="t" style="left:791px;top:594px;font-size:11px;line-height:13px;letter-spacing:-0.200px;">0</div>
<div class="a" style="left:837px;top:591px;width:46px;height:16px;background:#add8e6;"></div>
<div class="t" style="left:843px;top:594px;font-size:11px;line-height:13px;letter-spacing:-0.200px;">0</div>
<div class="a" style="left:884px;top:591px;width:45px;height:16px;background:#add8e6;"></div>
<div class="a" style="left:930px;top:591px;width:68px;height:16px;background:#add8e6;"></div>
<div class="t" style="left:936px;top:594px;font-size:11px;line-height:13px;letter-spacing:-0.200px;">Gast</div>
<div class="a" style="left:999px;top:591px;width:81px;height:16px;background:#add8e6;"></div>
<div class="t" style="left:1005px;top:594px;font-size:11px;line-height:13px;letter-spacing:-0.200px;">01.01.1990</div>
<div class="a" style="left:282px;top:608px;width:68px;height:16px;background:#add8e6;"></div>
<div class="t" style="left:285px;top:611px;font-size:11px;line-height:13px;letter-spacing:-0.200px;">0001</div>
<div class="a" style="left:351px;top:608px;width:122px;height:16px;background:#add8e6;"></div>
<div class="t" style="left:357px;top:611px;font-size:11px;line-height:13px;letter-spacing:-0.091px;">Technische Dienste</div>
<div class="a" style="left:474px;top:608px;width:45px;height:16px;background:#add8e6;"></div>
<div class="t" style="left:480px;top:611px;font-size:11px;line-height:13px;letter-spacing:-0.200px;">Frau</div>
<div class="a" style="left:520px;top:608px;width:100px;height:16px;background:#add8e6;"></div>
<div class="t" style="left:520px;top:611px;font-size:11px;line-height:13px;letter-spacing:-0.200px;width:100px;text-align:center;">01EANBetriebID14</div>
<div class="a" style="left:621px;top:608px;width:75px;height:16px;background:#add8e6;"></div>
<div class="t" style="left:627px;top:611px;font-size:11px;line-height:13px;letter-spacing:-0.200px;">Eva</div>
<div class="a" style="left:697px;top:608px;width:87px;height:16px;background:#add8e6;"></div>
<div class="t" style="left:697px;top:611px;font-size:11px;line-height:13px;letter-spacing:-0.193px;width:87px;text-align:center;">AN_BetriebID14</div>
<div class="a" style="left:785px;top:608px;width:51px;height:16px;background:#add8e6;"></div>
<div class="t" style="left:791px;top:611px;font-size:11px;line-height:13px;letter-spacing:-0.200px;">1</div>
<div class="a" style="left:837px;top:608px;width:46px;height:16px;background:#add8e6;"></div>
<div class="t" style="left:843px;top:611px;font-size:11px;line-height:13px;letter-spacing:-0.200px;">1</div>
<div class="a" style="left:884px;top:608px;width:45px;height:16px;background:#add8e6;"></div>
<div class="t" style="left:890px;top:611px;font-size:11px;line-height:13px;letter-spacing:-0.200px;">AN</div>
<div class="a" style="left:930px;top:608px;width:68px;height:16px;background:#add8e6;"></div>
<div class="t" style="left:936px;top:611px;font-size:11px;line-height:13px;letter-spacing:-0.200px;">Ersatz</div>
<div class="a" style="left:999px;top:608px;width:81px;height:16px;background:#add8e6;"></div>
<div class="t" style="left:1005px;top:611px;font-size:11px;line-height:13px;letter-spacing:-0.200px;">02.02.1990</div>
<div class="a" style="left:282px;top:625px;width:68px;height:16px;background:#add8e6;"></div>
<div class="t" style="left:285px;top:628px;font-size:11px;line-height:13px;letter-spacing:-0.200px;">0002</div>
<div class="a" style="left:351px;top:625px;width:122px;height:16px;background:#add8e6;"></div>
<div class="t" style="left:357px;top:628px;font-size:11px;line-height:13px;letter-spacing:-0.091px;">Technische Dienste</div>
<div class="a" style="left:474px;top:625px;width:45px;height:16px;background:#add8e6;"></div>
<div class="t" style="left:480px;top:628px;font-size:11px;line-height:13px;letter-spacing:-0.200px;">Frau</div>
<div class="a" style="left:520px;top:625px;width:100px;height:16px;background:#add8e6;"></div>
<div class="t" style="left:520px;top:628px;font-size:11px;line-height:13px;letter-spacing:-0.200px;width:100px;text-align:center;">02EANBetriebID14</div>
<div class="a" style="left:621px;top:625px;width:75px;height:16px;background:#add8e6;"></div>
<div class="t" style="left:627px;top:628px;font-size:11px;line-height:13px;letter-spacing:-0.200px;">Eva</div>
<div class="a" style="left:697px;top:625px;width:87px;height:16px;background:#add8e6;"></div>
<div class="t" style="left:697px;top:628px;font-size:11px;line-height:13px;letter-spacing:-0.193px;width:87px;text-align:center;">AN_BetriebID14</div>
<div class="a" style="left:785px;top:625px;width:51px;height:16px;background:#add8e6;"></div>
<div class="t" style="left:791px;top:628px;font-size:11px;line-height:13px;letter-spacing:-0.200px;">1</div>
<div class="a" style="left:837px;top:625px;width:46px;height:16px;background:#add8e6;"></div>
<div class="t" style="left:843px;top:628px;font-size:11px;line-height:13px;letter-spacing:-0.200px;">2</div>
<div class="a" style="left:884px;top:625px;width:45px;height:16px;background:#add8e6;"></div>
<div class="t" style="left:890px;top:628px;font-size:11px;line-height:13px;letter-spacing:-0.200px;">AN</div>
<div class="a" style="left:930px;top:625px;width:68px;height:16px;background:#add8e6;"></div>
<div class="t" style="left:936px;top:628px;font-size:11px;line-height:13px;letter-spacing:-0.200px;">Ersatz</div>
<div class="a" style="left:999px;top:625px;width:81px;height:16px;background:#add8e6;"></div>
<div class="t" style="left:1005px;top:628px;font-size:11px;line-height:13px;letter-spacing:-0.200px;">03.02.1990</div>
<div class="a" style="left:282px;top:642px;width:68px;height:16px;background:#add8e6;"></div>
<div class="t" style="left:285px;top:645px;font-size:11px;line-height:13px;letter-spacing:-0.200px;">0003</div>
<div class="a" style="left:351px;top:642px;width:122px;height:16px;background:#add8e6;"></div>
<div class="t" style="left:357px;top:645px;font-size:11px;line-height:13px;letter-spacing:-0.091px;">Technische Dienste</div>
<div class="a" style="left:474px;top:642px;width:45px;height:16px;background:#add8e6;"></div>
<div class="t" style="left:480px;top:645px;font-size:11px;line-height:13px;letter-spacing:-0.200px;">Herr</div>
<div class="a" style="left:520px;top:642px;width:100px;height:16px;background:#add8e6;"></div>
<div class="t" style="left:520px;top:645px;font-size:11px;line-height:13px;letter-spacing:-0.200px;width:100px;text-align:center;">03EANBetriebID14</div>
<div class="a" style="left:621px;top:642px;width:75px;height:16px;background:#add8e6;"></div>
<div class="t" style="left:627px;top:645px;font-size:11px;line-height:13px;letter-spacing:-0.200px;">Adam</div>
<div class="a" style="left:697px;top:642px;width:87px;height:16px;background:#add8e6;"></div>
<div class="t" style="left:697px;top:645px;font-size:11px;line-height:13px;letter-spacing:-0.193px;width:87px;text-align:center;">AN_BetriebID14</div>
<div class="a" style="left:785px;top:642px;width:51px;height:16px;background:#add8e6;"></div>
<div class="t" style="left:791px;top:645px;font-size:11px;line-height:13px;letter-spacing:-0.200px;">1</div>
<div class="a" style="left:837px;top:642px;width:46px;height:16px;background:#add8e6;"></div>
<div class="t" style="left:843px;top:645px;font-size:11px;line-height:13px;letter-spacing:-0.200px;">3</div>
<div class="a" style="left:884px;top:642px;width:45px;height:16px;background:#add8e6;"></div>
<div class="t" style="left:890px;top:645px;font-size:11px;line-height:13px;letter-spacing:-0.200px;">AN</div>
<div class="a" style="left:930px;top:642px;width:68px;height:16px;background:#add8e6;"></div>
<div class="t" style="left:936px;top:645px;font-size:11px;line-height:13px;letter-spacing:-0.200px;">Ersatz</div>
<div class="a" style="left:999px;top:642px;width:81px;height:16px;background:#add8e6;"></div>
<div class="t" style="left:1005px;top:645px;font-size:11px;line-height:13px;letter-spacing:-0.200px;">04.02.1990</div>
<div class="a" style="left:282px;top:659px;width:68px;height:16px;background:#0078d7;"></div>
<div class="t" style="left:285px;top:662px;font-size:11px;line-height:13px;letter-spacing:-0.200px;color:#fff;">0004</div>
<div class="a" style="left:351px;top:659px;width:122px;height:16px;background:#0078d7;"></div>
<div class="t" style="left:357px;top:662px;font-size:11px;line-height:13px;letter-spacing:-0.091px;color:#fff;">Technische Dienste</div>
<div class="a" style="left:474px;top:659px;width:45px;height:16px;background:#0078d7;"></div>
<div class="t" style="left:480px;top:662px;font-size:11px;line-height:13px;letter-spacing:-0.200px;color:#fff;">Herr</div>
<div class="a" style="left:520px;top:659px;width:100px;height:16px;background:#0078d7;"></div>
<div class="t" style="left:520px;top:662px;font-size:11px;line-height:13px;letter-spacing:-0.166px;width:100px;text-align:center;color:#fff;">04EANBetriebID14</div>
<div class="a" style="left:621px;top:659px;width:75px;height:16px;background:#0078d7;"></div>
<div class="t" style="left:627px;top:662px;font-size:11px;line-height:13px;letter-spacing:-0.200px;color:#fff;">Adam</div>
<div class="a" style="left:697px;top:659px;width:87px;height:16px;background:#0078d7;"></div>
<div class="t" style="left:697px;top:662px;font-size:11px;line-height:13px;letter-spacing:-0.193px;width:87px;text-align:center;color:#fff;">AN_BetriebID14</div>
<div class="a" style="left:785px;top:659px;width:51px;height:16px;background:#0078d7;"></div>
<div class="t" style="left:791px;top:662px;font-size:11px;line-height:13px;letter-spacing:-0.200px;color:#fff;">1</div>
<div class="a" style="left:837px;top:659px;width:46px;height:16px;background:#0078d7;"></div>
<div class="t" style="left:843px;top:662px;font-size:11px;line-height:13px;letter-spacing:-0.200px;color:#fff;">4</div>
<div class="a" style="left:884px;top:659px;width:45px;height:16px;background:#0078d7;"></div>
<div class="t" style="left:890px;top:662px;font-size:11px;line-height:13px;letter-spacing:-0.200px;color:#fff;">AN</div>
<div class="a" style="left:930px;top:659px;width:68px;height:16px;background:#0078d7;"></div>
<div class="t" style="left:936px;top:662px;font-size:11px;line-height:13px;letter-spacing:-0.200px;color:#fff;">Ersatz</div>
<div class="a" style="left:999px;top:659px;width:81px;height:16px;background:#0078d7;"></div>
<div class="t" style="left:1005px;top:662px;font-size:11px;line-height:13px;letter-spacing:-0.200px;color:#fff;">05.02.1990</div>
<div class="a" style="left:282px;top:676px;width:68px;height:16px;background:#ffa07a;"></div>
<div class="t" style="left:285px;top:679px;font-size:11px;line-height:13px;letter-spacing:-0.200px;">0005</div>
<div class="a" style="left:351px;top:676px;width:122px;height:16px;background:#ffa07a;"></div>
<div class="t" style="left:357px;top:679px;font-size:11px;line-height:13px;letter-spacing:-0.171px;">AAA Aktiengesellschaft</div>
<div class="a" style="left:474px;top:676px;width:45px;height:16px;background:#ffa07a;"></div>
<div class="t" style="left:480px;top:679px;font-size:11px;line-height:13px;letter-spacing:-0.200px;">Herr</div>
<div class="a" style="left:520px;top:676px;width:100px;height:16px;background:#ffa07a;"></div>
<div class="t" style="left:520px;top:679px;font-size:11px;line-height:13px;letter-spacing:-0.200px;width:100px;text-align:center;">Test</div>
<div class="a" style="left:621px;top:676px;width:75px;height:16px;background:#ffa07a;"></div>
<div class="t" style="left:627px;top:679px;font-size:11px;line-height:13px;letter-spacing:-0.200px;">AN01E_ID02</div>
<div class="a" style="left:697px;top:676px;width:87px;height:16px;background:#ffa07a;"></div>
<div class="t" style="left:697px;top:679px;font-size:11px;line-height:13px;letter-spacing:-0.200px;width:87px;text-align:center;">RWE AG AN</div>
<div class="a" style="left:785px;top:676px;width:51px;height:16px;background:#ffa07a;"></div>
<div class="t" style="left:791px;top:679px;font-size:11px;line-height:13px;letter-spacing:-0.200px;">1</div>
<div class="a" style="left:837px;top:676px;width:46px;height:16px;background:#ffa07a;"></div>
<div class="t" style="left:843px;top:679px;font-size:11px;line-height:13px;letter-spacing:-0.200px;">1</div>
<div class="a" style="left:884px;top:676px;width:45px;height:16px;background:#ffa07a;"></div>
<div class="t" style="left:890px;top:679px;font-size:11px;line-height:13px;letter-spacing:-0.200px;">AN</div>
<div class="a" style="left:930px;top:676px;width:68px;height:16px;background:#ffa07a;"></div>
<div class="t" style="left:936px;top:679px;font-size:11px;line-height:13px;letter-spacing:-0.200px;">Ersatz</div>
<div class="a" style="left:999px;top:676px;width:81px;height:16px;background:#ffa07a;"></div>
<div class="t" style="left:1005px;top:679px;font-size:11px;line-height:13px;letter-spacing:-0.200px;">01.01.1990</div>
<div class="a" style="left:282px;top:693px;width:68px;height:16px;background:#ffa07a;"></div>
<div class="t" style="left:285px;top:696px;font-size:11px;line-height:13px;letter-spacing:-0.200px;">0006</div>
<div class="a" style="left:351px;top:693px;width:122px;height:16px;background:#ffa07a;"></div>
<div class="t" style="left:357px;top:696px;font-size:11px;line-height:13px;letter-spacing:-0.171px;">AAA Aktiengesellschaft</div>
<div class="a" style="left:474px;top:693px;width:45px;height:16px;background:#ffa07a;"></div>
<div class="t" style="left:480px;top:696px;font-size:11px;line-height:13px;letter-spacing:-0.200px;">Frau</div>
<div class="a" style="left:520px;top:693px;width:100px;height:16px;background:#ffa07a;"></div>
<div class="t" style="left:520px;top:696px;font-size:11px;line-height:13px;letter-spacing:-0.200px;width:100px;text-align:center;">Test</div>
<div class="a" style="left:621px;top:693px;width:75px;height:16px;background:#ffa07a;"></div>
<div class="t" style="left:627px;top:696px;font-size:11px;line-height:13px;letter-spacing:-0.200px;">AN02_ID02</div>
<div class="a" style="left:697px;top:693px;width:87px;height:16px;background:#ffa07a;"></div>
<div class="t" style="left:697px;top:696px;font-size:11px;line-height:13px;letter-spacing:-0.200px;width:87px;text-align:center;">RWE AG AN</div>
<div class="a" style="left:785px;top:693px;width:51px;height:16px;background:#ffa07a;"></div>
<div class="t" style="left:791px;top:696px;font-size:11px;line-height:13px;letter-spacing:-0.200px;">1</div>
<div class="a" style="left:837px;top:693px;width:46px;height:16px;background:#ffa07a;"></div>
<div class="t" style="left:843px;top:696px;font-size:11px;line-height:13px;letter-spacing:-0.200px;">2</div>
<div class="a" style="left:884px;top:693px;width:45px;height:16px;background:#ffa07a;"></div>
<div class="t" style="left:890px;top:696px;font-size:11px;line-height:13px;letter-spacing:-0.200px;">AN</div>
<div class="a" style="left:930px;top:693px;width:68px;height:16px;background:#ffa07a;"></div>
<div class="t" style="left:936px;top:696px;font-size:11px;line-height:13px;letter-spacing:-0.200px;">Delegierte(r)</div>
<div class="a" style="left:999px;top:693px;width:81px;height:16px;background:#ffa07a;"></div>
<div class="t" style="left:1005px;top:696px;font-size:11px;line-height:13px;letter-spacing:-0.200px;">02.01.1990</div>
<div class="a" style="left:282px;top:710px;width:68px;height:16px;background:#ffa07a;"></div>
<div class="t" style="left:285px;top:713px;font-size:11px;line-height:13px;letter-spacing:-0.200px;">0007</div>
<div class="a" style="left:351px;top:710px;width:122px;height:16px;background:#ffa07a;"></div>
<div class="t" style="left:357px;top:713px;font-size:11px;line-height:13px;letter-spacing:-0.171px;">AAA Aktiengesellschaft</div>
<div class="a" style="left:474px;top:710px;width:45px;height:16px;background:#ffa07a;"></div>
<div class="t" style="left:480px;top:713px;font-size:11px;line-height:13px;letter-spacing:-0.200px;">Herr</div>
<div class="a" style="left:520px;top:710px;width:100px;height:16px;background:#ffa07a;"></div>
<div class="t" style="left:520px;top:713px;font-size:11px;line-height:13px;letter-spacing:-0.200px;width:100px;text-align:center;">Test</div>
<div class="a" style="left:621px;top:710px;width:75px;height:16px;background:#ffa07a;"></div>
<div class="t" style="left:627px;top:713px;font-size:11px;line-height:13px;letter-spacing:-0.200px;">AN02E_ID02</div>
<div class="a" style="left:697px;top:710px;width:87px;height:16px;background:#ffa07a;"></div>
<div class="t" style="left:697px;top:713px;font-size:11px;line-height:13px;letter-spacing:-0.200px;width:87px;text-align:center;">RWE AG AN</div>
<div class="a" style="left:785px;top:710px;width:51px;height:16px;background:#ffa07a;"></div>
<div class="t" style="left:791px;top:713px;font-size:11px;line-height:13px;letter-spacing:-0.200px;">1</div>
<div class="a" style="left:837px;top:710px;width:46px;height:16px;background:#ffa07a;"></div>
<div class="t" style="left:843px;top:713px;font-size:11px;line-height:13px;letter-spacing:-0.200px;">2</div>
<div class="a" style="left:884px;top:710px;width:45px;height:16px;background:#ffa07a;"></div>
<div class="t" style="left:890px;top:713px;font-size:11px;line-height:13px;letter-spacing:-0.200px;">AN</div>
<div class="a" style="left:930px;top:710px;width:68px;height:16px;background:#ffa07a;"></div>
<div class="t" style="left:936px;top:713px;font-size:11px;line-height:13px;letter-spacing:-0.200px;">Ersatz</div>
<div class="a" style="left:999px;top:710px;width:81px;height:16px;background:#ffa07a;"></div>
<div class="t" style="left:1005px;top:713px;font-size:11px;line-height:13px;letter-spacing:-0.200px;">02.01.1990</div>
<div class="a" style="left:282px;top:727px;width:68px;height:16px;background:#add8e6;"></div>
<div class="t" style="left:285px;top:730px;font-size:11px;line-height:13px;letter-spacing:-0.200px;">0008</div>
<div class="a" style="left:351px;top:727px;width:122px;height:16px;background:#add8e6;"></div>
<div class="t" style="left:357px;top:730px;font-size:11px;line-height:13px;letter-spacing:-0.171px;">AAA Aktiengesellschaft</div>
<div class="a" style="left:474px;top:727px;width:45px;height:16px;background:#add8e6;"></div>
<div class="t" style="left:480px;top:730px;font-size:11px;line-height:13px;letter-spacing:-0.200px;">Herr</div>
<div class="a" style="left:520px;top:727px;width:100px;height:16px;background:#add8e6;"></div>
<div class="t" style="left:520px;top:730px;font-size:11px;line-height:13px;letter-spacing:-0.200px;width:100px;text-align:center;">Test</div>
<div class="a" style="left:621px;top:727px;width:75px;height:16px;background:#add8e6;"></div>
<div class="t" style="left:627px;top:730px;font-size:11px;line-height:13px;letter-spacing:-0.200px;">AN04_ID02</div>
<div class="a" style="left:697px;top:727px;width:87px;height:16px;background:#add8e6;"></div>
<div class="t" style="left:697px;top:730px;font-size:11px;line-height:13px;letter-spacing:-0.200px;width:87px;text-align:center;">RWE AG AN</div>
<div class="a" style="left:785px;top:727px;width:51px;height:16px;background:#add8e6;"></div>
<div class="t" style="left:791px;top:730px;font-size:11px;line-height:13px;letter-spacing:-0.200px;">1</div>
<div class="a" style="left:837px;top:727px;width:46px;height:16px;background:#add8e6;"></div>
<div class="t" style="left:843px;top:730px;font-size:11px;line-height:13px;letter-spacing:-0.200px;">4</div>
<div class="a" style="left:884px;top:727px;width:45px;height:16px;background:#add8e6;"></div>
<div class="t" style="left:890px;top:730px;font-size:11px;line-height:13px;letter-spacing:-0.200px;">AN</div>
<div class="a" style="left:930px;top:727px;width:68px;height:16px;background:#add8e6;"></div>
<div class="t" style="left:936px;top:730px;font-size:11px;line-height:13px;letter-spacing:-0.200px;">Delegierte(r)</div>
<div class="a" style="left:999px;top:727px;width:81px;height:16px;background:#add8e6;"></div>
<div class="t" style="left:1005px;top:730px;font-size:11px;line-height:13px;letter-spacing:-0.200px;">04.01.1990</div>
</div></div>
<div class="a" style="left:278px;top:738px;width:786px;height:17px;background:#f0f0f0;"></div>
<div class="a" style="left:296px;top:738px;width:392px;height:17px;background:#cdcdcd;"></div>
<svg class="a" style="left:278px;top:738px;" width="17" height="17"><path d="M10.800 5.400 L7.700 8.500 L10.800 11.600" fill="none" stroke="#5c5c5c" stroke-width="2.100"/></svg>
<svg class="a" style="left:1030px;top:738px;" width="17" height="17"><path d="M5.400 5.400 L8.500 8.500 L5.400 11.600" fill="none" stroke="#5c5c5c" stroke-width="2.100"/></svg>
<div class="a" style="left:1047px;top:567px;width:17px;height:171px;background:#f0f0f0;"></div>
<div class="a" style="left:1047px;top:584px;width:15px;height:108px;background:#cdcdcd;"></div>
<svg class="a" style="left:1047px;top:566px;" width="17" height="17"><path d="M4.400 11.600 L7.500 8.500 L10.600 11.600" fill="none" stroke="#5c5c5c" stroke-width="2.100"/></svg>
<svg class="a" style="left:1047px;top:721px;" width="17" height="17"><path d="M4.400 6 L7.500 9.100 L10.600 6" fill="none" stroke="#5c5c5c" stroke-width="2.100"/></svg>
</body></html>
